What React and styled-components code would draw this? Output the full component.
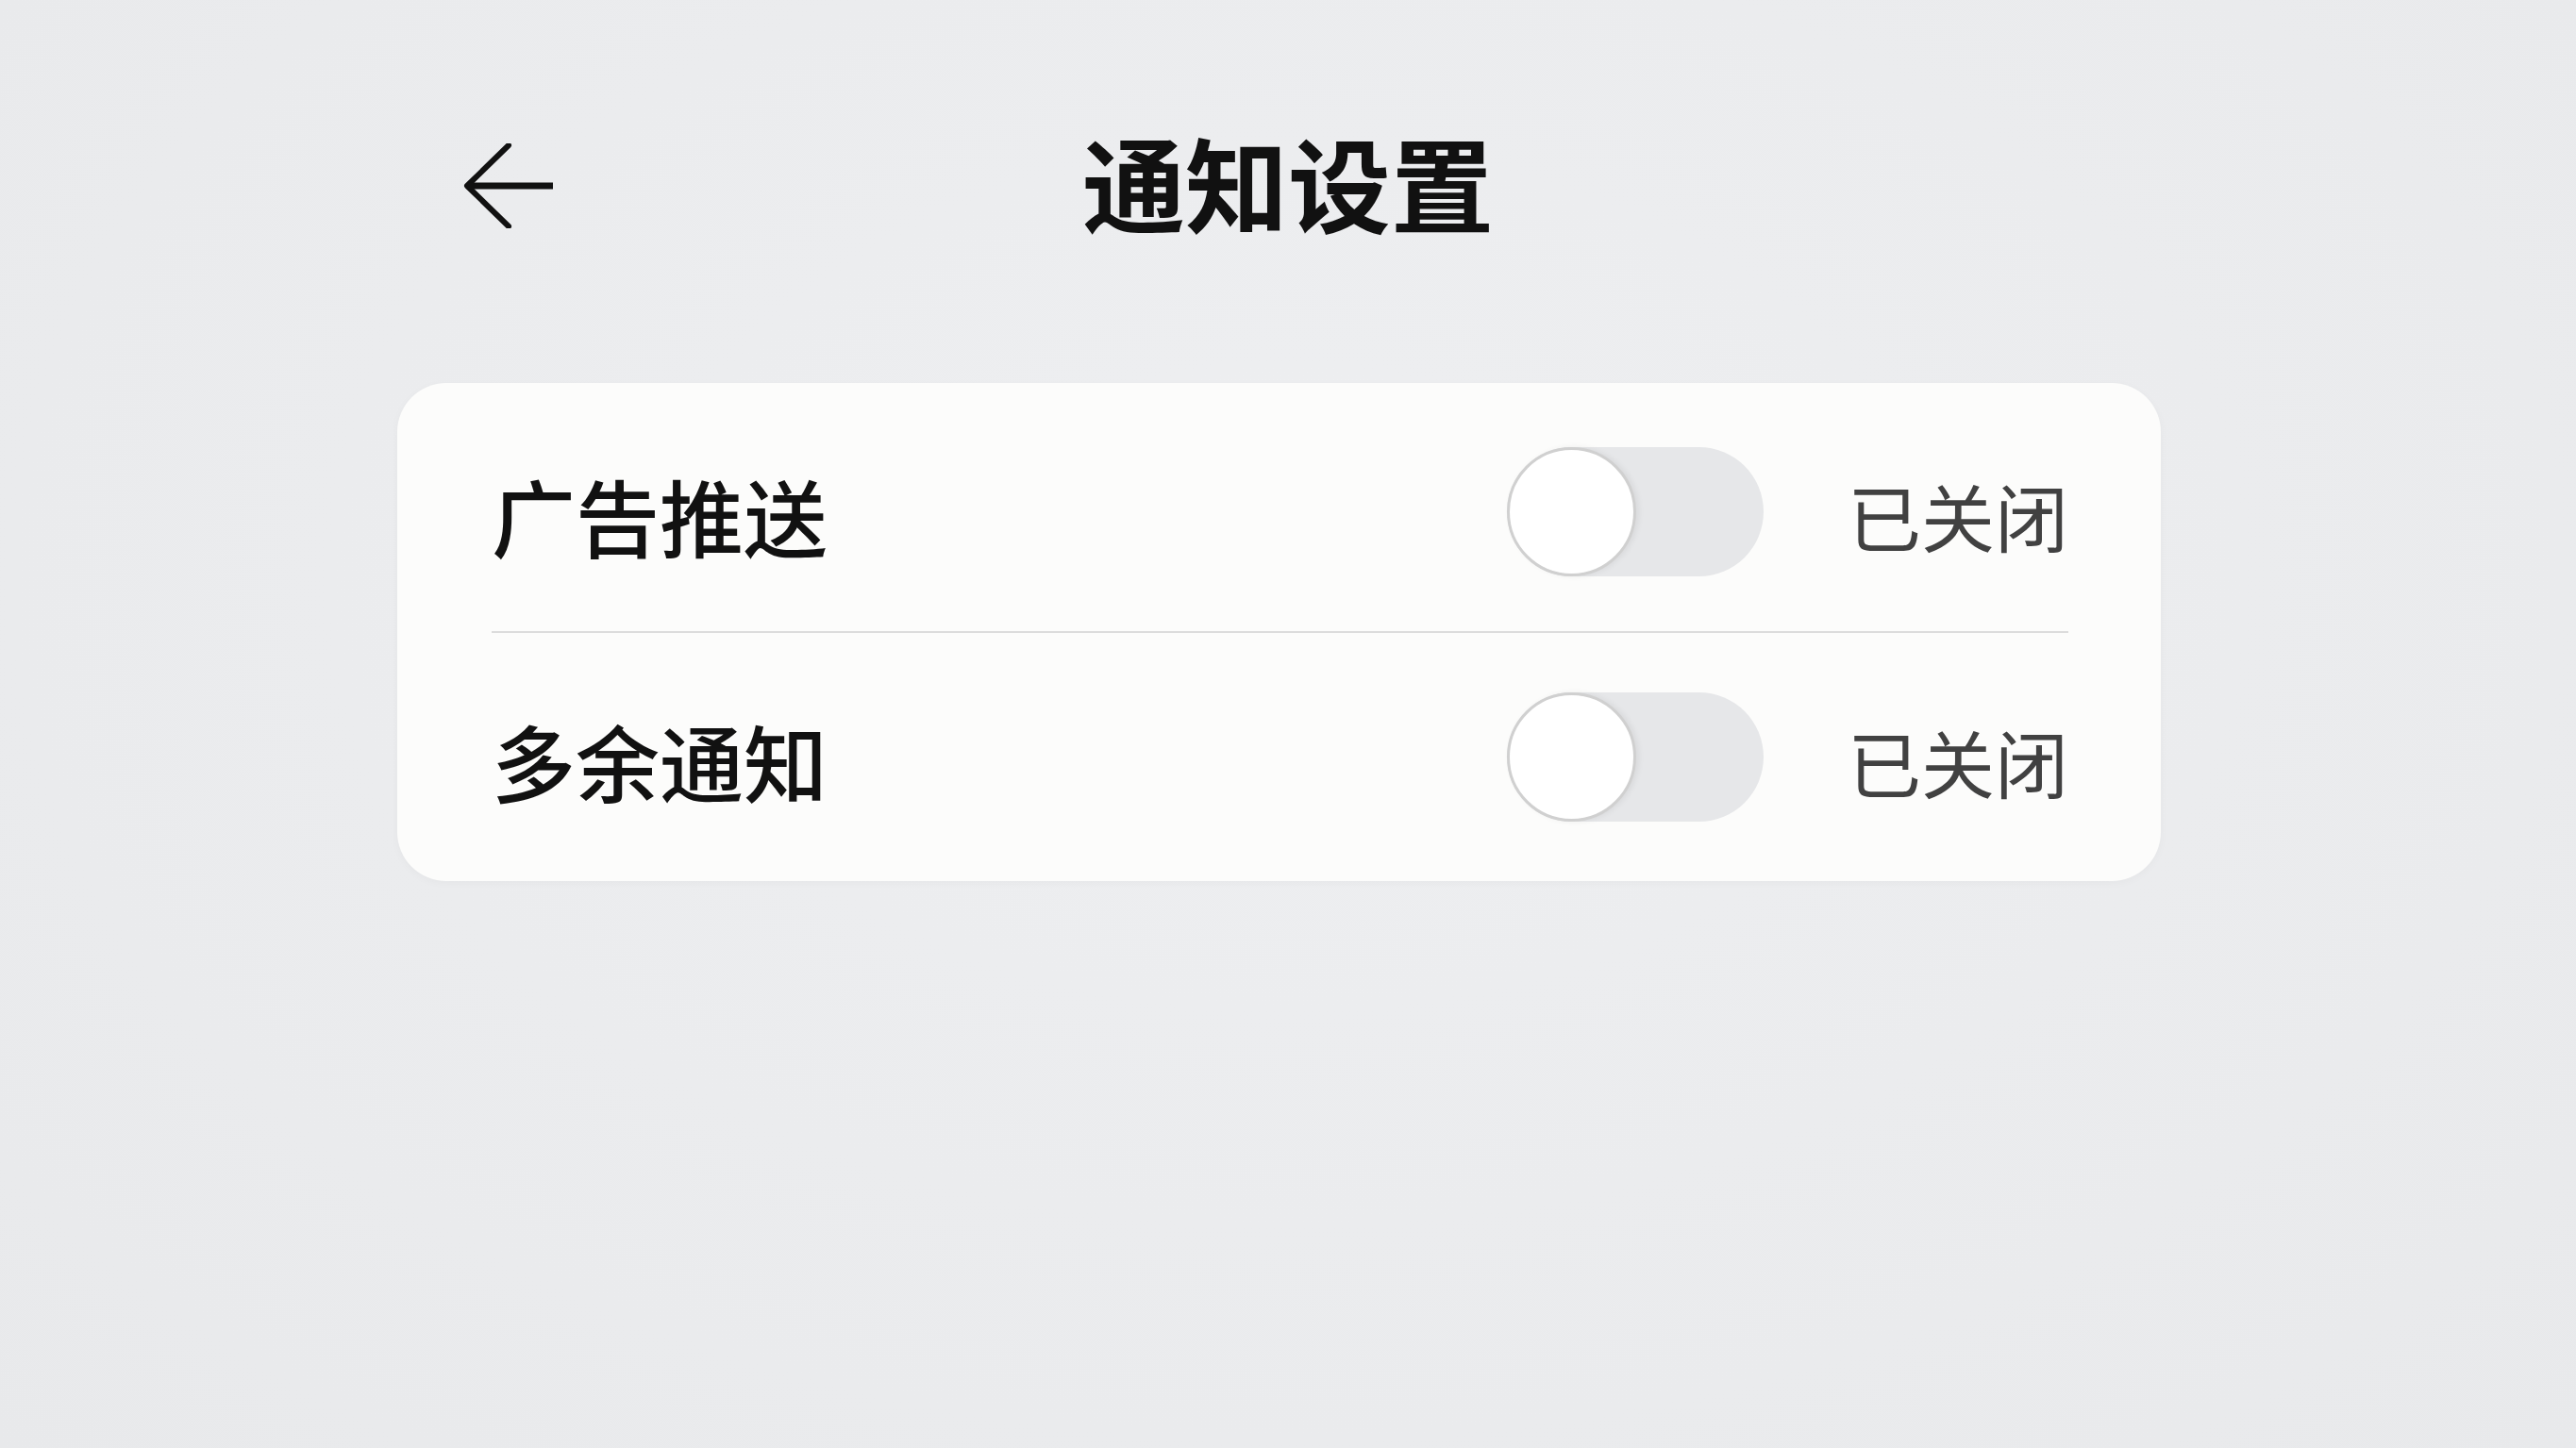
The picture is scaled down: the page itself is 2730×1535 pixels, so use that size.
import React from 'react';
import styled, { createGlobalStyle } from 'styled-components';

const GlobalStyle = createGlobalStyle`
  html, body {
    margin: 0;
    padding: 0;
    background: #ebecee;
  }
  body {
    font-family: "Noto Sans CJK SC", "Noto Sans", sans-serif;
  }
`;

const Page = styled.div`
  width: 2730px;
  height: 1535px;
  background: radial-gradient(ellipse at 50% 40%, #eeeff1 0%, #eaebed 70%, #e8e9eb 100%);
  display: flex;
  flex-direction: column;
  overflow: hidden;
`;

const Header = styled.header`
  display: grid;
  grid-template-columns: 1fr auto 1fr;
  align-items: center;
  height: 200px;
  margin-top: 97px;
`;

const BackButton = styled.button`
  justify-self: start;
  margin-left: 490px;
  padding: 0;
  border: 0;
  background: transparent;
  cursor: pointer;
  display: flex;
  align-items: center;
`;

const Title = styled.h1`
  margin: 0 0 12px;
  font-size: 109px;
  font-weight: 700;
  color: #111;
  letter-spacing: 0;
  line-height: 1;
`;

const Card = styled.section`
  margin: 109px 0 0 421px;
  width: 1869px;
  box-sizing: border-box;
  padding: 0 98px 0 100px;
  background: #fcfcfb;
  border-radius: 52px;
  box-shadow: 0 2px 10px rgba(0, 0, 0, 0.03);
`;

const Row = styled.div`
  display: flex;
  align-items: center;
  justify-content: space-between;
  box-sizing: border-box;
  height: ${({ tall }) => (tall ? 265 : 263)}px;
  padding-top: ${({ divided }) => (divided ? 0 : 9)}px;
  border-top: ${({ divided }) => (divided ? '2px solid #dcdcdc' : 'none')};
`;

const Label = styled.span`
  font-size: 89px;
  font-weight: 500;
  color: #111;
  line-height: 1;
  margin-top: 6px;
`;

const Controls = styled.div`
  display: flex;
  align-items: center;
  gap: 89px;
`;

const Track = styled.div`
  width: 272px;
  height: 137px;
  border-radius: 69px;
  background: #e6e7e9;
  display: flex;
  align-items: center;
  box-sizing: border-box;
`;

const Knob = styled.div`
  width: 137px;
  height: 137px;
  border-radius: 50%;
  box-sizing: border-box;
  background: #fff;
  border: 3px solid #d0d0d0;
  box-shadow: 3px 0 6px rgba(0, 0, 0, 0.06);
`;

const Status = styled.span`
  font-size: 78px;
  font-weight: 400;
  color: #414141;
  line-height: 1;
  margin-top: 8px;
`;

function BackArrow() {
  return (
    <svg width="100" height="90" viewBox="0 0 100 90" fill="none">
      <path d="M49 2 L5 45 L49 88" stroke="#111" strokeWidth="6" strokeLinecap="round" strokeLinejoin="round" />
      <path d="M6 45 H96" stroke="#111" strokeWidth="7" strokeLinecap="butt" />
    </svg>
  );
}

function Toggle() {
  return (
    <Track>
      <Knob />
    </Track>
  );
}

const items = [
  { label: '广告推送', status: '已关闭' },
  { label: '多余通知', status: '已关闭' },
];

export default function App() {
  return (
    <Page>
      <GlobalStyle />
      <Header>
        <BackButton type="button" aria-label="返回">
          <BackArrow />
        </BackButton>
        <Title>通知设置</Title>
        <span />
      </Header>
      <Card>
        {items.map((item, i) => (
          <Row key={item.label} divided={i > 0} tall={i > 0}>
            <Label>{item.label}</Label>
            <Controls>
              <Toggle />
              <Status>{item.status}</Status>
            </Controls>
          </Row>
        ))}
      </Card>
    </Page>
  );
}
